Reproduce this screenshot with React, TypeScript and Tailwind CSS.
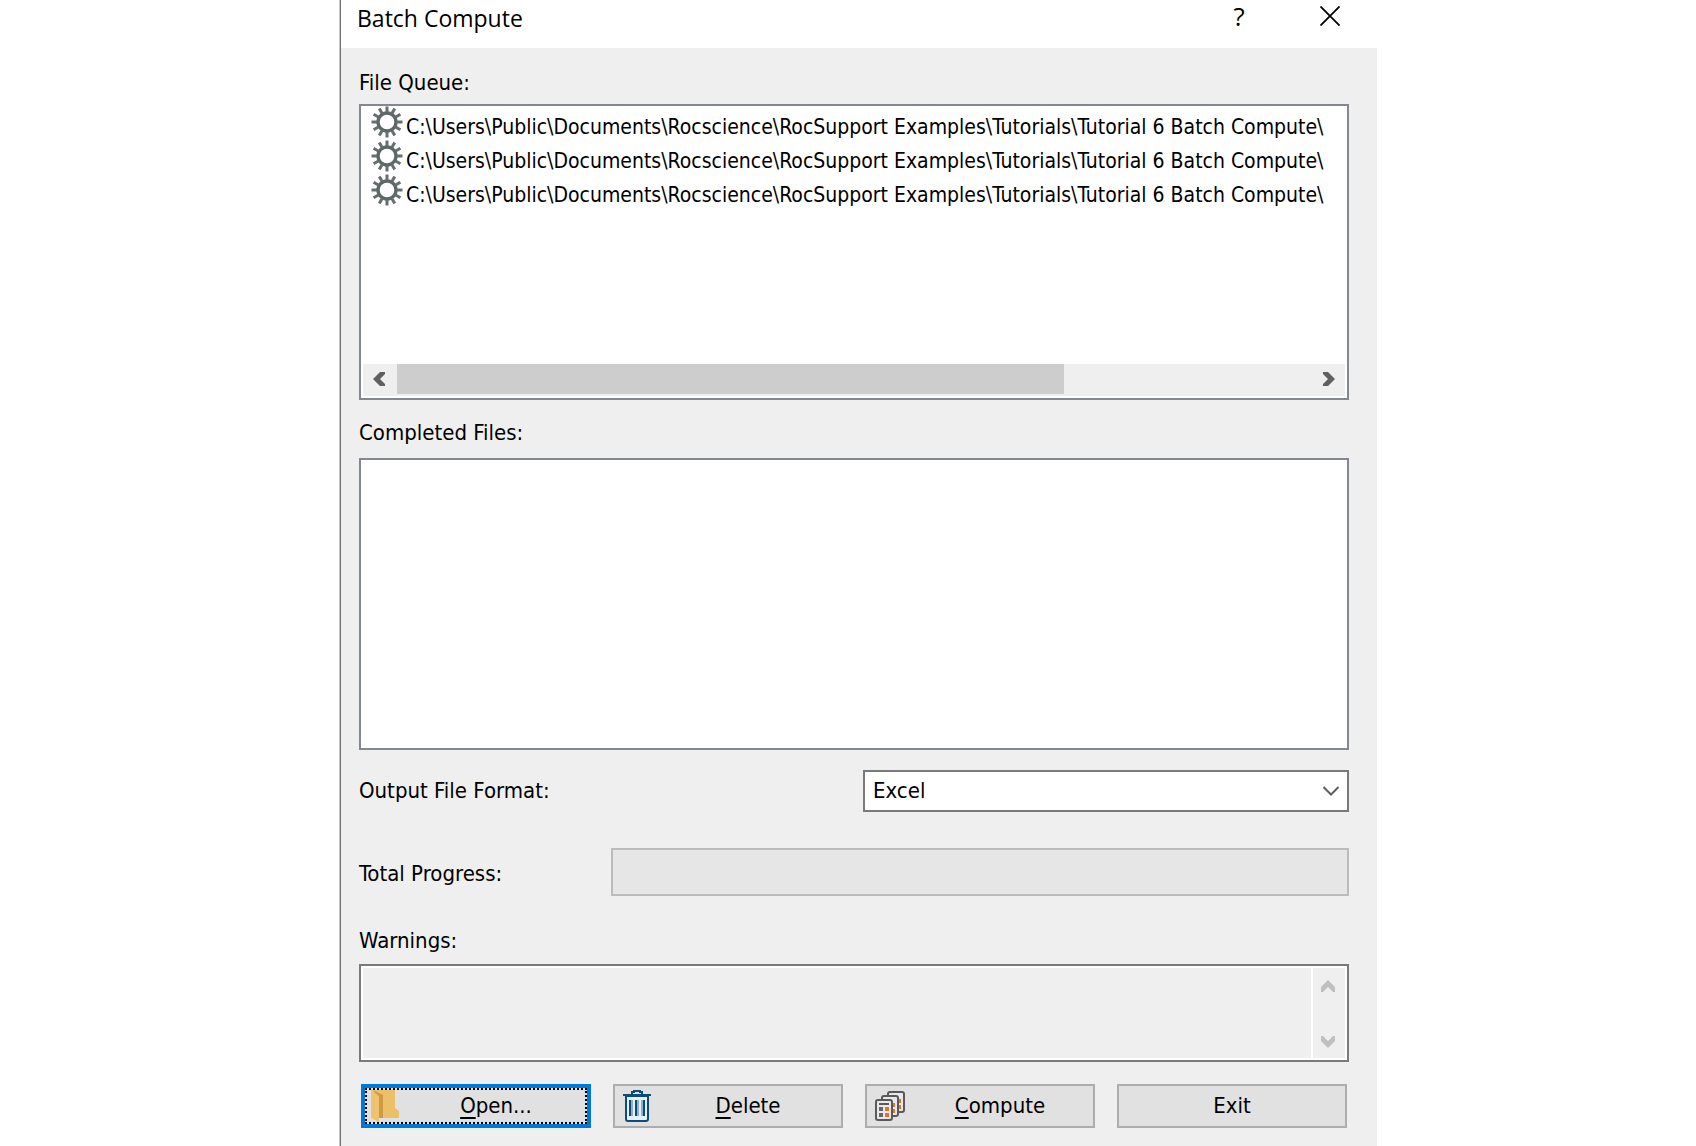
import type { ReactNode } from "react";

const files = [1, 2, 3].map((id) => ({
  id,
  path: "C:\\Users\\Public\\Documents\\Rocscience\\RocSupport Examples\\Tutorials\\Tutorial 6 Batch Compute\\",
}));

const teeth = [0, 30, 60, 90, 120, 150, 180, 210, 240, 270, 300, 330];

function GearIcon() {
  return (
    <svg width="32" height="32" viewBox="-16 -16 32 32" className="shrink-0" aria-hidden="true">
      <circle r="9" fill="#fff" stroke="#5f6868" strokeWidth="3.4" />
      {teeth.map((angle) => (
        <path key={angle} d="M0 -10V-15.5" stroke="#666e6e" strokeWidth="3" transform={`rotate(${angle})`} />
      ))}
    </svg>
  );
}

function FolderIcon() {
  return (
    <svg width="28" height="32" viewBox="0 0 28 32" aria-hidden="true">
      <path d="M0 0H24V18L28 21V28H0Z" fill="#ecc069" />
      <path d="M2 0L12 5V28H8V32L6 31V6Z" fill="#cf9a47" />
      <path d="M0 0L8 6V32L0 28Z" fill="#efc36c" />
    </svg>
  );
}

function TrashIcon() {
  return (
    <svg width="28" height="32" viewBox="0 0 28 32" aria-hidden="true">
      <path d="M3 6V29Q3 31 5 31H23Q25 31 25 29V6Z" fill="#e6f2fb" stroke="#0b4c78" strokeWidth="2" />
      <path d="M0 5H28M9 4V2H11V1H17V2H19V4" fill="none" stroke="#0b4c78" strokeWidth="2" />
      <path d="M7 10V26M13 10V26M21 10V26" stroke="#0b4c78" strokeWidth="2" />
      <path d="M9 10V26M15 10V26M19 10V26" stroke="#8fb0c8" strokeWidth="2" />
    </svg>
  );
}

function CalculatorsIcon() {
  return (
    <svg width="30" height="30" viewBox="0 0 30 30" aria-hidden="true">
      <g fill="#e9e9e9" stroke="#595959" strokeWidth="2">
        <rect x="13" y="1" width="16" height="20" rx="2" />
        <path d="M25 8V12M25 14V18" stroke="#e8702a" />
        <rect x="7" y="5" width="16" height="20" rx="2" />
        <path d="M19 12V16M19 18V22" stroke="#e8702a" />
        <rect x="1" y="9" width="16" height="20" rx="2" />
      </g>
      <path d="M4 13H14" stroke="#595959" strokeWidth="2" />
      <path d="M4 16H8V20H4ZM4 22H8V26H4Z" fill="#666" />
      <path d="M10 16H14V20H10ZM10 22H14V26H10Z" fill="#e8702a" />
    </svg>
  );
}

function ScrollArrow({ className }: { className?: string }) {
  return (
    <svg width="14" height="12" viewBox="0 0 14 12" className={className} aria-hidden="true">
      <path d="M0 12V7L7 0L14 7V12H12L7 7L2 12Z" fill="currentColor" />
    </svg>
  );
}

function ActionButton({ icon, focused, children }: { icon?: ReactNode; focused?: boolean; children: ReactNode }) {
  return (
    <button
      type="button"
      className={`relative flex h-11 items-center justify-center bg-[#e1e1e1] ${
        focused ? "border-4 border-[#0078d7]" : "border-2 border-[#adadad]"
      }`}
    >
      {focused && <span className="absolute inset-0 border-2 border-dotted border-black" />}
      {icon && <span className={`absolute ${focused ? "left-1.5" : "left-2"}`}>{icon}</span>}
      <span className={icon ? "pl-10" : ""}>{children}</span>
    </button>
  );
}

function Hotkey({ children }: { children: string }) {
  return <span className="underline decoration-2 underline-offset-4">{children}</span>;
}

export default function App() {
  return (
    <div className="min-h-screen bg-white pr-[319px] pl-[340px]">
      <main className="flex min-h-screen flex-col border-l border-[#707070] bg-[#efefef] font-['DejaVu_Sans_Condensed','Noto_Sans',sans-serif] text-[22px] leading-[30px] text-black shadow-[-1px_0_0_#c8c8c8]">
        <header className="flex h-12 items-start bg-white pr-[31px] pl-4">
          <h1 className="flex-1 font-['Open_Sans',sans-serif] text-[23px] leading-9">Batch Compute</h1>
          <button type="button" aria-label="Help" className="h-8 w-8 font-['Open_Sans',sans-serif] text-[26px] leading-8">
            ?
          </button>
          <button type="button" aria-label="Close" className="ml-[59px] flex h-8 w-8 items-center justify-center">
            <svg width="20" height="20" viewBox="0 0 20 20" aria-hidden="true">
              <path d="M0.5 0.5L19.5 19.5M19.5 0.5L0.5 19.5" stroke="#000" strokeWidth="1.8" />
            </svg>
          </button>
        </header>

        <div className="flex flex-col pt-5 pr-7 pb-4 pl-[18px]">
          {/* Queue */}
          <h2 id="queue-label">File Queue:</h2>
          <div className="mt-1.5 flex h-[296px] flex-col border-2 border-[#828790] bg-white px-0.5 pb-0.5">
            <ul aria-labelledby="queue-label" className="flex-1 overflow-hidden">
              {files.map((file) => (
                <li key={file.id} className="flex h-[34px] items-start pl-2 whitespace-nowrap">
                  <GearIcon />
                  <span className="pt-1.5 pl-[3px] text-[21px]">{file.path}</span>
                </li>
              ))}
            </ul>
            <div className="flex h-8 items-center bg-[#efefef] text-[#606060]">
              <button type="button" aria-label="Scroll left" className="flex h-8 w-[34px] items-center justify-center pr-0.5 pb-0.5">
                <ScrollArrow className="-rotate-90" />
              </button>
              <div className="h-full flex-1 pb-0.5">
                <div className="h-full w-[73%] bg-[#cdcdcd]" />
              </div>
              <button type="button" aria-label="Scroll right" className="flex h-8 w-[34px] items-center justify-center pb-0.5 pl-0.5">
                <ScrollArrow className="rotate-90" />
              </button>
            </div>
          </div>

          {/* Completed */}
          <h2 id="completed-label" className="mt-[18px]">Completed Files:</h2>
          <ul aria-labelledby="completed-label" className="mt-2.5 h-[292px] border-2 border-[#828790] bg-white" />

          <div className="mt-5 flex items-center justify-between">
            <label htmlFor="format">Output File Format:</label>
            <div className="relative w-[486px]">
              <select
                id="format"
                className="block h-[42px] w-full appearance-none border-2 border-[#7a7a7a] bg-white pl-2 leading-7"
              >
                <option>Excel</option>
              </select>
              <svg width="16" height="10" viewBox="0 0 16 10" className="pointer-events-none absolute top-4 right-2.5" aria-hidden="true">
                <path d="M0.5 1L8 8.5L15.5 1" fill="none" stroke="#606060" strokeWidth="2" />
              </svg>
            </div>
          </div>

          <div className="mt-9 flex items-center justify-between">
            <span id="progress-label" className="pt-1">Total Progress:</span>
            <div
              role="progressbar"
              aria-labelledby="progress-label"
              aria-valuenow={0}
              className="h-12 w-[738px] border-2 border-[#bcbcbc] bg-[#e6e6e6]"
            />
          </div>

          <label htmlFor="warnings" className="mt-[30px]">Warnings:</label>
          <div className="mt-2 flex h-[98px] border-2 border-[#7a7a7a] bg-white p-0.5">
            <textarea id="warnings" readOnly className="h-full flex-1 resize-none bg-[#efefef] outline-none" />
            <div className="ml-0.5 flex w-8 flex-col items-center justify-between bg-[#efefef] pt-3 pr-0.5 pb-2.5 text-[#bfbfbf]">
              <ScrollArrow />
              <ScrollArrow className="rotate-180" />
            </div>
          </div>

          <div className="mt-[22px] grid grid-cols-4 gap-[22px] px-0.5">
            <ActionButton icon={<FolderIcon />} focused>
              <Hotkey>O</Hotkey>pen...
            </ActionButton>
            <ActionButton icon={<TrashIcon />}>
              <Hotkey>D</Hotkey>elete
            </ActionButton>
            <ActionButton icon={<CalculatorsIcon />}>
              <Hotkey>C</Hotkey>ompute
            </ActionButton>
            <ActionButton>Exit</ActionButton>
          </div>
        </div>
      </main>
    </div>
  );
}
